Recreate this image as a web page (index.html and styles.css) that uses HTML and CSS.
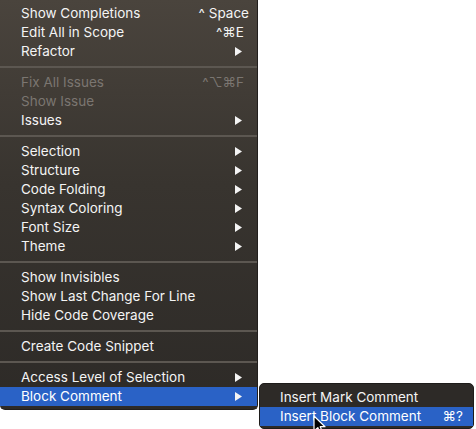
FILE: index.html
```html
<!DOCTYPE html>
<html>
<head>
<meta charset="utf-8">
<link rel="stylesheet" href="styles.css">
</head>
<body>
<div class="menu main">
  <div class="item"><span>Show Completions</span><span class="key k-space">^ Space</span></div>
  <div class="item"><span>Edit All in Scope</span><span class="key">^⌘E</span></div>
  <div class="item"><span>Refactor</span><svg class="arrow" viewBox="0 0 7 9"><polygon points="0,0 7,4.5 0,9"/></svg></div>
  <div class="sep"></div>
  <div class="item off"><span>Fix All Issues</span><span class="key">^⌥⌘F</span></div>
  <div class="item off"><span>Show Issue</span></div>
  <div class="item"><span>Issues</span><svg class="arrow" viewBox="0 0 7 9"><polygon points="0,0 7,4.5 0,9"/></svg></div>
  <div class="sep"></div>
  <div class="item"><span>Selection</span><svg class="arrow" viewBox="0 0 7 9"><polygon points="0,0 7,4.5 0,9"/></svg></div>
  <div class="item"><span>Structure</span><svg class="arrow" viewBox="0 0 7 9"><polygon points="0,0 7,4.5 0,9"/></svg></div>
  <div class="item"><span>Code Folding</span><svg class="arrow" viewBox="0 0 7 9"><polygon points="0,0 7,4.5 0,9"/></svg></div>
  <div class="item"><span>Syntax Coloring</span><svg class="arrow" viewBox="0 0 7 9"><polygon points="0,0 7,4.5 0,9"/></svg></div>
  <div class="item"><span>Font Size</span><svg class="arrow" viewBox="0 0 7 9"><polygon points="0,0 7,4.5 0,9"/></svg></div>
  <div class="item"><span>Theme</span><svg class="arrow" viewBox="0 0 7 9"><polygon points="0,0 7,4.5 0,9"/></svg></div>
  <div class="sep"></div>
  <div class="item"><span>Show Invisibles</span></div>
  <div class="item"><span>Show Last Change For Line</span></div>
  <div class="item"><span>Hide Code Coverage</span></div>
  <div class="sep"></div>
  <div class="item"><span>Create Code Snippet</span></div>
  <div class="sep"></div>
  <div class="item"><span>Access Level of Selection</span><svg class="arrow" viewBox="0 0 7 9"><polygon points="0,0 7,4.5 0,9"/></svg></div>
  <div class="item hl"><span>Block Comment</span><svg class="arrow" viewBox="0 0 7 9"><polygon points="0,0 7,4.5 0,9"/></svg></div>
</div>
<div class="menu sub">
  <div class="item"><span>Insert Mark Comment</span></div>
  <div class="item hl"><span>Insert Block Comment</span><span class="key">⌘?</span></div>
</div>
<svg class="cursor" width="15" height="21" viewBox="0 0 15 21"><path d="M1 1 L1 16 L4.8 12.6 L7.4 18.6 L9.8 17.6 L7.2 11.7 L12 11.7 Z" fill="#000" stroke="#fff" stroke-width="1.2" stroke-linejoin="round"/></svg>
</body>
</html>
```

FILE: styles.css
```css
html, body {
  margin: 0;
  padding: 0;
  background: #ffffff;
}
body {
  width: 476px;
  height: 429px;
  overflow: hidden;
  position: relative;
  font-family: Inter, "Liberation Sans", sans-serif;
  font-size: 13.5px;
  color: #f4f4f4;
}
.menu {
  box-sizing: border-box;
}
.main {
  width: 258px;
  padding: 3.5px 0 3px 0;
  background: linear-gradient(180deg, #4a443d 0%, #38342f 45%, #2d2a27 100%);
  border-radius: 0 0 5px 5px;
  border-right: 1px solid #221f1d;
  border-bottom: 1px solid #221f1d;
}
.item {
  height: 19px;
  display: flex;
  align-items: center;
  justify-content: space-between;
  padding: 0 8px 0 21px;
  white-space: nowrap;
}
.item.off {
  color: #7b7671;
}
.item.hl {
  background: #2a62c6;
  color: #ffffff;
}
.key {
  margin-right: 5px;
}
.k-space {
  margin-right: 0;
}
.arrow {
  width: 7px;
  height: 9px;
  margin-right: 7px;
  fill: #f4f4f4;
}
.sep {
  height: 12px;
  display: flex;
  align-items: center;
}
.sep::before {
  content: "";
  display: block;
  width: 100%;
  height: 2px;
  background: #5c5751;
}
.sub {
  position: absolute;
  left: 259px;
  top: 383px;
  width: 215px;
  padding: 3.5px 0 2px 0;
  background: #2d2a27;
  border: 1px solid #1e1c1a;
  border-radius: 5px;
}
.sub .item {
  padding: 0 10px 0 20px;
}
.sub .key {
  margin-right: 0;
}
.cursor {
  position: absolute;
  left: 313px;
  top: 415px;
}
```
